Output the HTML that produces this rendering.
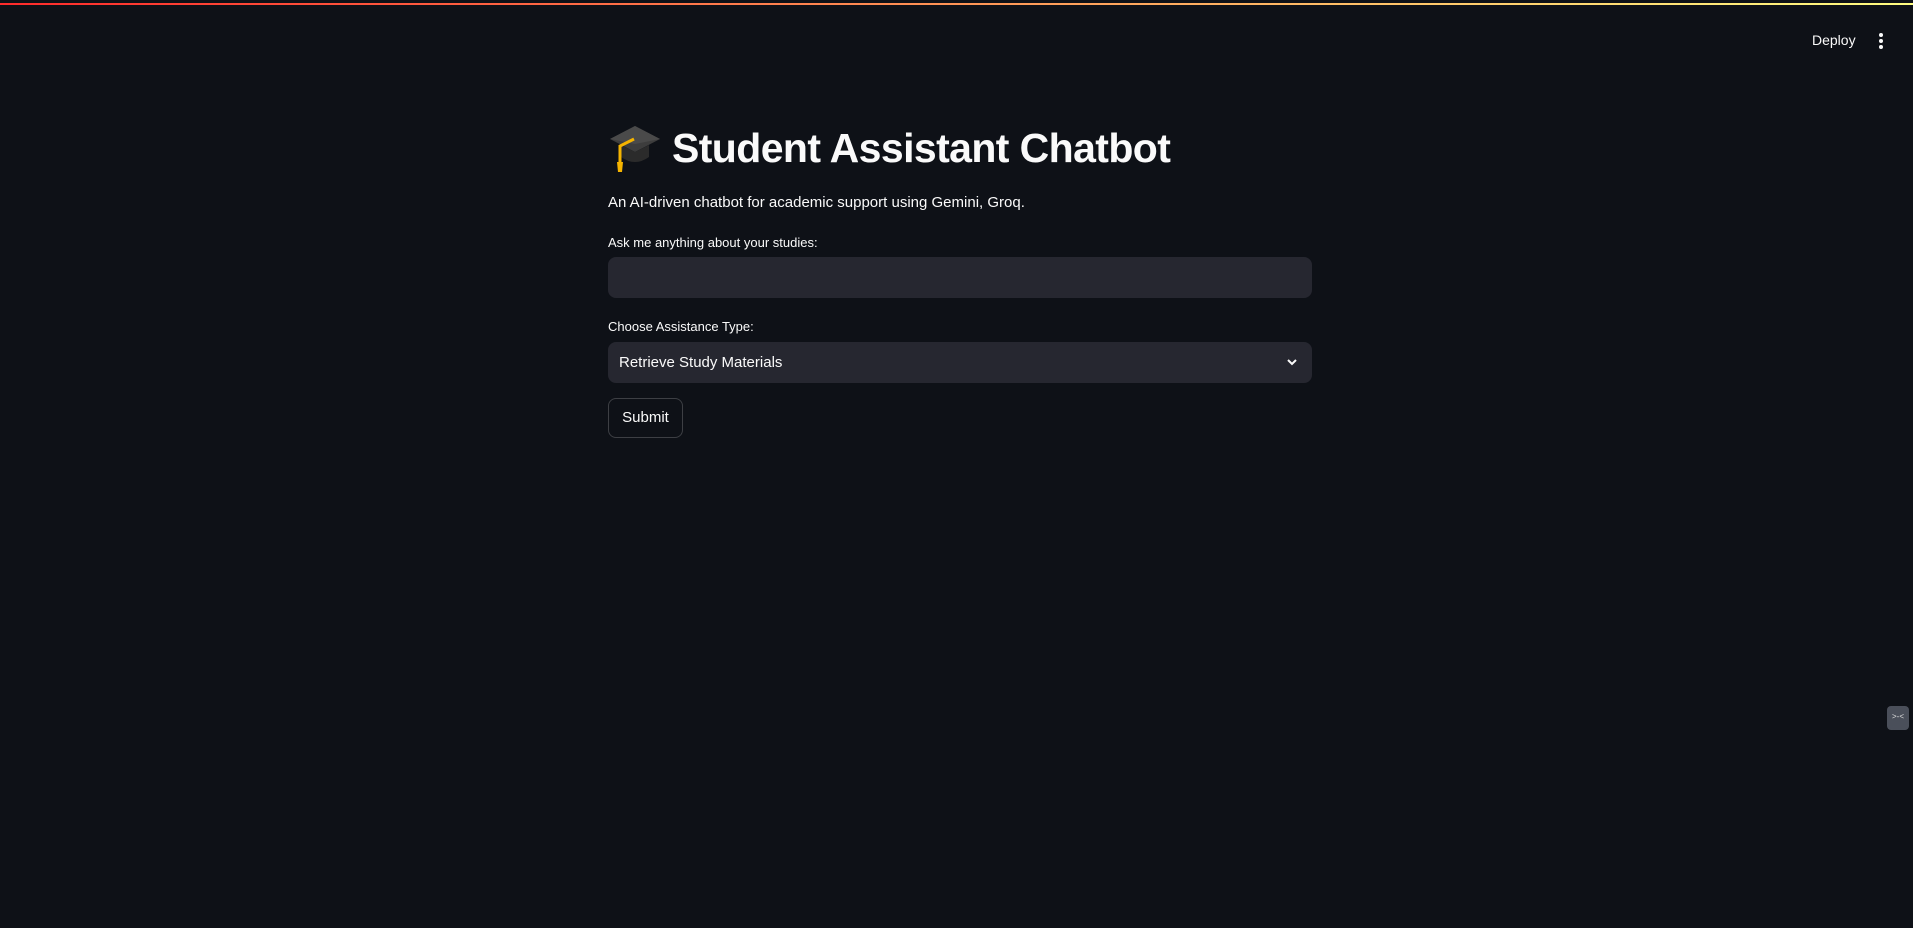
<!DOCTYPE html>
<html><head><meta charset="utf-8"><style>
html,body{margin:0;padding:0;background:#0e1117;width:1913px;height:928px;overflow:hidden;font-family:"Liberation Sans",sans-serif;color:#fafafa}
.bar{position:absolute;left:0;top:3px;width:1913px;height:2px;background:linear-gradient(90deg,#ff2b2b,#fffd80)}
.deploy{position:absolute;left:1812px;top:32px;font-size:14px;line-height:16px;color:#fafafa}
.dots{position:absolute;left:1879px;top:33px;width:4px}
.dots i{display:block;width:4px;height:4px;border-radius:2px;background:#fafafa;margin-bottom:2px}
.emoji{position:absolute;left:608px;top:122px}
h1{position:absolute;left:672px;top:124px;margin:0;font-size:41px;font-weight:700;line-height:48px;letter-spacing:-0.6px;white-space:nowrap}
.sub{position:absolute;left:608px;top:194px;font-size:15px;line-height:18px}
.lbl{position:absolute;left:608px;font-size:13px;line-height:16px}
.box{position:absolute;left:608px;width:704px;height:41px;background:#262730;border-radius:8px}
.sel{font-size:15px;line-height:41px;box-sizing:border-box;padding-left:11px}
.chev{position:absolute;right:14px;top:15px}
.btn{position:absolute;left:608px;top:398px;width:75px;height:40px;border:1px solid rgba(250,250,250,.2);border-radius:8px;font-size:15px;text-align:center;line-height:38px;box-sizing:border-box}
.ic{position:absolute;left:1887px;top:706px;width:22px;height:24px;background:#4a4f5a;border-radius:4px;font-size:8px;line-height:22px;text-align:center;color:#ddd}
</style></head><body>
<div class="bar"></div>
<div class="deploy">Deploy</div>
<div class="dots"><i></i><i></i><i></i></div>
<svg class="emoji" width="54" height="50" viewBox="0 0 54 50"><path d="M27 4 L52 17 L27 30 L2 17Z" fill="#3d3d3d"/><path d="M27 4 L52 17 L27 22 L2 17Z" fill="#4a4a4a"/><path d="M13 23 L13 35 Q27 45 41 35 L41 23 L27 30Z" fill="#2b2b2b"/><path d="M26 17 L12 24 L12 42" stroke="#f5b400" stroke-width="3" fill="none"/><path d="M9 40 L15 40 L14 50 L10 50Z" fill="#f5b400"/></svg>
<h1>Student Assistant Chatbot</h1>
<div class="sub">An AI-driven chatbot for academic support using Gemini, Groq.</div>
<div class="lbl" style="top:235px">Ask me anything about your studies:</div>
<div class="box" style="top:257px"></div>
<div class="lbl" style="top:319px">Choose Assistance Type:</div>
<div class="box sel" style="top:342px">Retrieve Study Materials<svg class="chev" width="12" height="10" viewBox="0 0 12 10"><path d="M2 3 L6 7 L10 3" stroke="#fafafa" stroke-width="2" fill="none"/></svg></div>
<div class="btn">Submit</div>
<div class="ic">&gt;-&lt;</div>
</body></html>
